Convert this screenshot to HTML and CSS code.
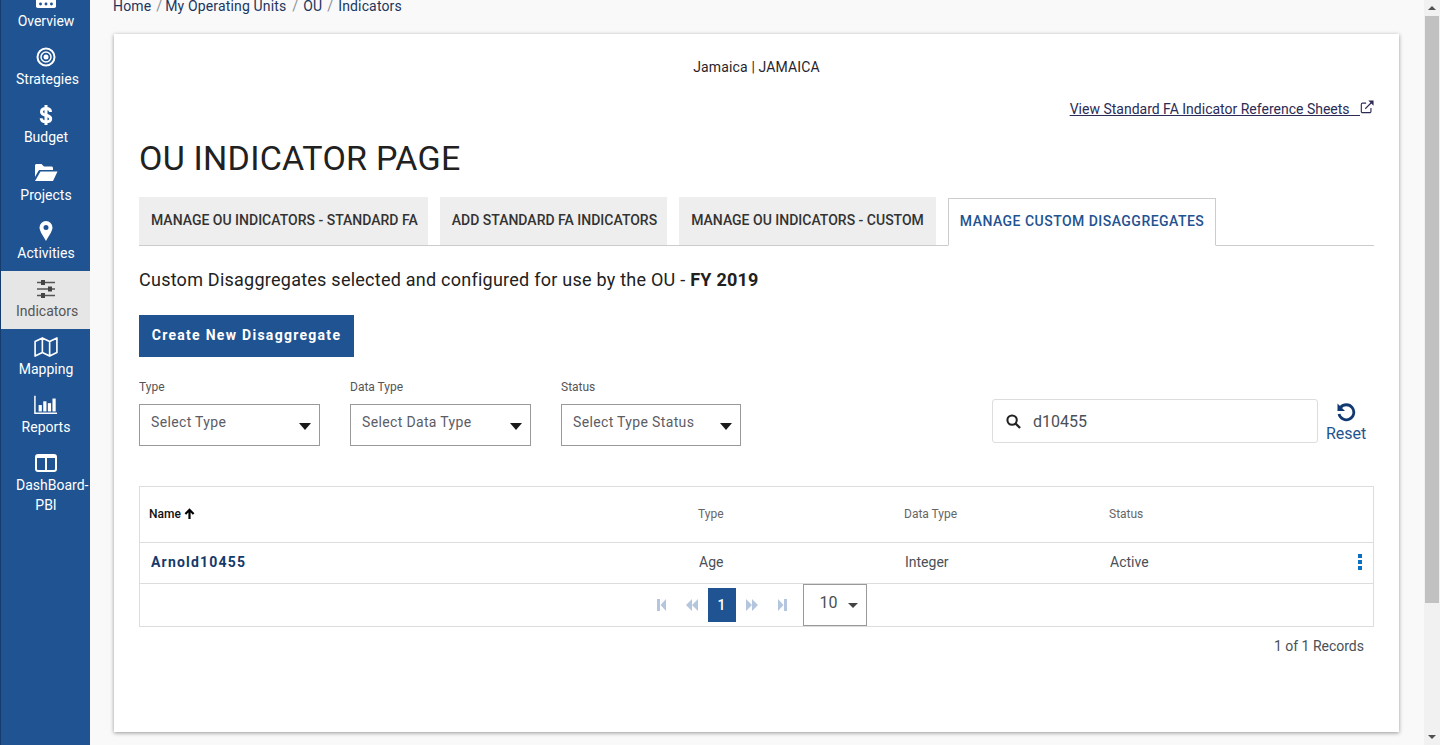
FILE: index.html

```html
<!DOCTYPE html>
<html>
  <head>
    <meta charset="utf-8">
    <title>OU Indicator Page</title>
    <link rel="stylesheet" href="styles.css">
  </head>
  <body>
    <div class="app">
      <nav class="sidebar">
        <ul class="nav-list">
          <li class="nav-item">
            <svg class="nav-icon" viewBox="0 0 22 20"><path fill="#fff" d="M4 2h14a4 4 0 0 1 4 4v12a2 2 0 0 1-2 2H2a2 2 0 0 1-2-2V6a4 4 0 0 1 4-4z"/><circle cx="5" cy="15.500" r="1.600" fill="#1f5391"/><circle cx="11" cy="15.500" r="1.600" fill="#1f5391"/><circle cx="17" cy="15.500" r="1.600" fill="#1f5391"/></svg>
            <span>Overview</span>
          </li>
          <li class="nav-item">
            <svg class="nav-icon" viewBox="0 0 20 20"><g fill="none" stroke="#fff"><circle cx="10" cy="10" r="8.500" stroke-width="2"/><circle cx="10" cy="10" r="5" stroke-width="1.500"/></g><circle cx="10" cy="10" r="2.500" fill="#fff"/></svg>
            <span>Strategies</span>
          </li>
          <li class="nav-item">
            <svg class="nav-icon" viewBox="0 0 20 20"><path fill="none" stroke="#fff" stroke-width="3" d="M14.500 7c0-2.300-1.800-3.500-4.500-3.500S5.500 4.800 5.500 6.900c0 4.600 9.200 2.200 9.200 6.800 0 2-2 3-4.700 3s-4.800-1.200-4.800-3.500"/><path stroke="#fff" stroke-width="3" d="M10 0v20"/></svg>
            <span>Budget</span>
          </li>
          <li class="nav-item">
            <svg class="nav-icon wide" viewBox="0 0 24 20"><path fill="#fff" d="M1 2.500C1 1.700 1.700 1 2.500 1h5L10 3.500h7.500c.8 0 1.500.7 1.500 1.500v2H6.500c-1 0-1.900.5-2.400 1.400L1 14z"/><path fill="#fff" d="M6.500 8.500H23.500l-4.500 9.500H1z"/></svg>
            <span>Projects</span>
          </li>
          <li class="nav-item">
            <svg class="nav-icon" viewBox="0 0 20 20"><path fill="#fff" fill-rule="evenodd" d="M10 0a6.500 6.500 0 0 1 6.500 6.500c0 3.600-4.500 9.800-6.500 13.500-2-3.700-6.500-9.900-6.500-13.500A6.500 6.500 0 0 1 10 0zm0 4a2.500 2.500 0 1 0 0 5 2.500 2.500 0 0 0 0-5z"/></svg>
            <span>Activities</span>
          </li>
          <li class="nav-item active">
            <svg class="nav-icon" viewBox="0 0 20 20"><g stroke="#555" stroke-width="1.400"><path d="M1 3.500h18M1 10h18M1 16.500h18"/></g><g fill="#444"><rect x="5" y="1" width="4" height="5"/><rect x="12" y="7.500" width="4" height="5"/><rect x="5" y="14" width="4" height="5"/></g></svg>
            <span>Indicators</span>
          </li>
          <li class="nav-item">
            <svg class="nav-icon wide" viewBox="0 0 26 22"><path fill="none" stroke="#fff" stroke-width="1.800" stroke-linejoin="round" d="M1 5l8-4 8 4 8-4v16l-8 4-8-4-8 4zM9 1v16M17 5v16"/></svg>
            <span>Mapping</span>
          </li>
          <li class="nav-item">
            <svg class="nav-icon wide" viewBox="0 0 26 20"><path fill="none" stroke="#fff" stroke-width="1.600" d="M1 0v19h24"/><g fill="#fff"><rect x="5" y="10" width="3.500" height="7"/><rect x="10" y="6" width="3.500" height="11"/><rect x="15" y="8" width="3.500" height="9"/><rect x="20" y="3" width="3.500" height="14"/></g></svg>
            <span>Reports</span>
          </li>
          <li class="nav-item">
            <svg class="nav-icon wide" viewBox="0 0 22 20"><path fill="none" stroke="#fff" stroke-width="2" d="M3 2h16a2 2 0 0 1 2 2v12a2 2 0 0 1-2 2H3a2 2 0 0 1-2-2V4a2 2 0 0 1 2-2zM11 2v16"/><path stroke="#fff" stroke-width="2" d="M1 4h20"/></svg>
            <span>DashBoard-PBI</span>
          </li>
        </ul>
      </nav>

      <main class="content">
        <div class="breadcrumb">
          <a>Home</a><i class="first">/</i><a>My Operating Units</a><i class="wider">/</i><a>OU</a><i>/</i><a>Indicators</a>
        </div>

        <section class="card">
          <p class="ou-name">Jamaica | JAMAICA</p>
          <div class="ref-link">
            <a>View Standard FA Indicator Reference Sheets &nbsp;&nbsp;</a>
            <svg viewBox="0 0 16 16"><path fill="none" stroke="#2b2b55" stroke-width="1.300" d="M12.500 9v4a1.500 1.500 0 0 1-1.500 1.500H3A1.500 1.500 0 0 1 1.500 13V5A1.500 1.500 0 0 1 3 3.500h4M6 10l8-8"/><path fill="#2b2b55" d="M9.500 .7h6v6z"/></svg>
          </div>

          <h1 class="page-title">OU INDICATOR PAGE</h1>

          <div class="tabs">
            <a class="tab">MANAGE OU INDICATORS - STANDARD FA</a>
            <a class="tab">ADD STANDARD FA INDICATORS</a>
            <a class="tab custom">MANAGE OU INDICATORS - CUSTOM</a>
            <a class="tab selected">MANAGE CUSTOM DISAGGREGATES</a>
          </div>

          <p class="subtitle">Custom Disaggregates selected and configured for use by the OU - <b>FY 2019</b></p>

          <button class="create-btn">Create New Disaggregate</button>

          <div class="filters">
            <div class="field">
              <label>Type</label>
              <div class="select"><span>Select Type</span><i class="caret"></i></div>
            </div>
            <div class="field">
              <label>Data Type</label>
              <div class="select"><span>Select Data Type</span><i class="caret"></i></div>
            </div>
            <div class="field narrow">
              <label>Status</label>
              <div class="select"><span>Select Type Status</span><i class="caret"></i></div>
            </div>
            <div class="search">
              <svg viewBox="0 0 16 16"><circle cx="6.500" cy="6.500" r="5" fill="none" stroke="#222" stroke-width="2.200"/><path stroke="#222" stroke-width="2.400" d="M10 10l5 5"/></svg>
              <span>d10455</span>
            </div>
            <div class="reset">
              <svg viewBox="0 0 20 20"><path fill="none" stroke="#123a72" stroke-width="2.800" d="M4.500 5.500A7.500 7.500 0 1 1 3 12"/><path fill="#123a72" d="M1.500 1.500l7.500 7.500H1.500z"/></svg>
              <span>Reset</span>
            </div>
          </div>

          <div class="grid">
            <div class="grid-row grid-head">
              <div class="col-name name-head">Name
                <svg viewBox="0 0 12 12"><path fill="none" stroke="#000" stroke-width="2.400" d="M6 12V2M1.500 6.500L6 2l4.500 4.500"/></svg>
              </div>
              <div class="col-type">Type</div>
              <div class="col-data">Data Type</div>
              <div class="col-status">Status</div>
            </div>
            <div class="grid-row grid-body">
              <div class="col-name name-cell">Arnold10455</div>
              <div class="col-type">Age</div>
              <div class="col-data">Integer</div>
              <div class="col-status">Active</div>
              <div class="kebab"><i></i><i></i><i></i></div>
            </div>
            <div class="pager">
              <svg class="pager-icon end" viewBox="0 0 9 12"><path d="M0 0h3v12H0zM9 0v12L3.500 6z"/></svg>
              <svg class="pager-icon" viewBox="0 0 12 12"><path d="M6 0v12L0 6zM12 0v12L6 6z"/></svg>
              <span class="page-num">1</span>
              <svg class="pager-icon" viewBox="0 0 12 12"><path d="M0 0v12l6-6zM6 0v12l6-6z"/></svg>
              <svg class="pager-icon end" viewBox="0 0 9 12"><path d="M0 0v12l5.500-6zM6 0h3v12H6z"/></svg>
              <div class="page-size"><span>10</span><i class="caret small"></i></div>
            </div>
          </div>

          <p class="records">1 of 1 Records</p>
        </section>
      </main>

      <div class="scrollbar">
        <i class="arrow up"></i>
        <div class="track"><div class="thumb"></div></div>
        <i class="arrow down"></i>
      </div>
    </div>
  </body>
</html>
```

FILE: styles.css

```css
* {
  margin: 0;
  padding: 0;
  box-sizing: border-box;
}

html, body {
  height: 100%;
  overflow: hidden;
}

body {
  font-family: Roboto, "Liberation Sans", sans-serif;
  color: #212529;
  background: #f9f9f9;
}

.app {
  display: flex;
  height: 745px;
  overflow: hidden;
}

/* sidebar */
.sidebar {
  flex: 0 0 90px;
  height: 745px;
  background: #1f5391;
  border-left: 1px solid #163c6e;
  overflow: hidden;
}

.nav-list {
  list-style: none;
  margin-top: -19px;
}

.nav-item {
  height: 58px;
  padding-top: 7px;
  display: flex;
  flex-direction: column;
  align-items: center;
  color: #fff;
  font-size: 14px;
  line-height: 20px;
  text-align: center;
}

.nav-item span {
  display: block;
  width: 60px;
  margin-left: 1px;
}

.nav-item:last-child {
  height: auto;
}

.nav-item.active {
  background: #e6e6e6;
  color: #555;
}

.nav-icon {
  width: 20px;
  height: 20px;
  margin-top: 1px;
  margin-bottom: 2px;
  margin-left: 1px;
  flex: none;
}

.nav-icon.wide {
  width: 24px;
}

/* main column */
.content {
  flex: 1;
  min-width: 0;
  padding: 0 25px 0 24px;
}

.breadcrumb {
  height: 34px;
  margin-left: -1px;
  font-size: 14px;
  line-height: 12px;
  letter-spacing: .15px;
  color: #1b365d;
}

.breadcrumb i {
  font-style: normal;
  color: #8a8f96;
  padding: 0 5px;
}

.breadcrumb i.first {
  padding: 0 3px 0 5px;
}

.breadcrumb i.wider {
  padding: 0 5px 0 6px;
}

.card {
  height: 698px;
  padding: 23px 25px 0;
  background: #fff;
  box-shadow: 0 1px 4px rgba(0, 0, 0, .4);
}

.ou-name {
  text-align: center;
  font-size: 14px;
  line-height: 20px;
  letter-spacing: .15px;
  color: #2a1f2a;
}

.ref-link {
  display: flex;
  justify-content: flex-end;
  align-items: flex-start;
  margin-top: 22px;
  font-size: 14px;
  line-height: 20px;
  color: #2b2b55;
}

.ref-link a {
  text-decoration: underline;
}

.ref-link svg {
  width: 14px;
  height: 14px;
  margin-top: 1px;
}

.page-title {
  margin-top: 18px;
  font-size: 34px;
  line-height: 42px;
  font-weight: 400;
  letter-spacing: .25px;
  color: #212121;
}

.tabs {
  display: flex;
  align-items: flex-end;
  gap: 12px;
  height: 49px;
  margin-top: 18px;
  border-bottom: 1px solid #ccc;
}

.tab {
  display: flex;
  align-items: center;
  height: 48px;
  padding: 0 10px 2px 12px;
  background: #eee;
  font-size: 14px;
  font-weight: 500;
  color: #333;
}

.tab.custom {
  padding-right: 12px;
}

.tab.selected {
  margin-bottom: -1px;
  padding: 0 11px 2px;
  background: #fff;
  border: 1px solid #ccc;
  border-bottom-color: #fff;
  color: #1f5391;
  letter-spacing: .47px;
}

.subtitle {
  margin-top: 23px;
  font-size: 18px;
  line-height: 22px;
  letter-spacing: .245px;
  color: #212121;
}

.create-btn {
  display: block;
  width: 215px;
  height: 42px;
  margin-top: 24px;
  padding-bottom: 2px;
  border: 0;
  background: #1f5391;
  color: #fff;
  font-family: inherit;
  font-size: 14px;
  font-weight: 700;
  letter-spacing: 1.28px;
}

.filters {
  display: flex;
  align-items: flex-start;
  margin-top: 22px;
}

.field {
  width: 181px;
  margin-right: 30px;
}

.field.narrow {
  width: 180px;
}

.field label {
  display: block;
  font-size: 12px;
  line-height: 16px;
  color: #555;
}

.select {
  display: flex;
  align-items: center;
  justify-content: space-between;
  height: 42px;
  margin-top: 9px;
  padding: 0 8px 0 11px;
  border: 1px solid #999;
  font-size: 14px;
  letter-spacing: .35px;
  color: #5c5c66;
}

.select span {
  margin-top: -6px;
}

.caret {
  display: block;
  width: 0;
  height: 0;
  margin-top: 3px;
  border-left: 6.500px solid transparent;
  border-right: 6.500px solid transparent;
  border-top: 7px solid #1a1a1a;
}

.caret.small {
  margin-top: 0;
  border-left-width: 5px;
  border-right-width: 5px;
  border-top-width: 5px;
  border-top-color: #444;
}

.search {
  display: flex;
  align-items: center;
  gap: 12px;
  width: 326px;
  height: 44px;
  margin-top: 20px;
  margin-left: 221px;
  padding-left: 13px;
  border: 1px solid #ddd;
  border-radius: 3px;
  font-size: 16px;
  color: #495057;
}

.search svg {
  width: 15px;
  height: 15px;
}

.reset {
  display: flex;
  flex-direction: column;
  align-items: center;
  margin-top: 23px;
  margin-left: 8px;
  font-size: 16px;
  line-height: 20px;
  color: #1f5391;
}

.reset svg {
  width: 20px;
  height: 20px;
  margin-bottom: 2px;
}

/* table */
.grid {
  margin-top: 40px;
  border: 1px solid #ddd;
}

.grid-row {
  display: flex;
  align-items: center;
  position: relative;
}

.grid-head {
  height: 56px;
  padding-bottom: 2px;
  border-bottom: 1px solid #ddd;
  font-size: 12px;
  color: #666;
}

.grid-body {
  height: 41px;
  padding-bottom: 2px;
  border-bottom: 1px solid #ddd;
  font-size: 14px;
  color: #495057;
}

.col-name {
  width: 558px;
  padding-left: 9px;
}

.col-type {
  width: 206px;
}

.col-data {
  width: 205px;
}

.col-status {
  width: 200px;
}

.grid-body .col-type,
.grid-body .col-data,
.grid-body .col-status {
  padding-left: 1px;
}

.name-head {
  display: flex;
  align-items: center;
  gap: 3px;
  font-weight: 500;
  color: #111;
}

.name-head svg {
  width: 11px;
  height: 11px;
}

.name-cell {
  padding-left: 11px;
  font-weight: 700;
  letter-spacing: 1.200px;
  font-size: 14px;
  color: #143a6b;
}

.kebab {
  position: absolute;
  right: 11px;
  top: 11px;
  display: flex;
  flex-direction: column;
  gap: 2px;
}

.kebab i {
  display: block;
  width: 4px;
  height: 4px;
  background: #0b6fc2;
}

.pager {
  display: flex;
  align-items: center;
  justify-content: center;
  height: 42px;
}

.pager-icon {
  width: 12px;
  height: 12px;
  margin: 0 10px;
  fill: #b4c6de;
}

.pager-icon.end {
  width: 9px;
}

.page-num {
  width: 28px;
  height: 34px;
  line-height: 34px;
  text-align: center;
  background: #1f5391;
  color: #fff;
  font-size: 14px;
  font-weight: 500;
}

.page-size {
  display: flex;
  align-items: center;
  gap: 11px;
  width: 64px;
  height: 42px;
  margin-left: 6px;
  padding-left: 16px;
  border: 1px solid #999;
  font-size: 16px;
  color: #495057;
}

.page-size span {
  margin-top: -5px;
}

.records {
  margin-top: 10px;
  padding-right: 10px;
  text-align: right;
  font-size: 14px;
  line-height: 18px;
  color: #495057;
}

/* browser scrollbar */
.scrollbar {
  flex: 0 0 16px;
  display: flex;
  flex-direction: column;
  align-items: center;
  height: 745px;
  background: #f1f1f1;
}

.track {
  flex: 1;
  width: 100%;
}

.thumb {
  width: 14px;
  height: 587px;
  margin: 0 auto;
  background: #c1c1c1;
}

.arrow {
  display: block;
  width: 0;
  height: 0;
  margin: 6px 0;
  border-left: 4px solid transparent;
  border-right: 4px solid transparent;
}

.arrow.up {
  border-bottom: 4px solid #505050;
}

.arrow.down {
  border-top: 4px solid #505050;
}
```
